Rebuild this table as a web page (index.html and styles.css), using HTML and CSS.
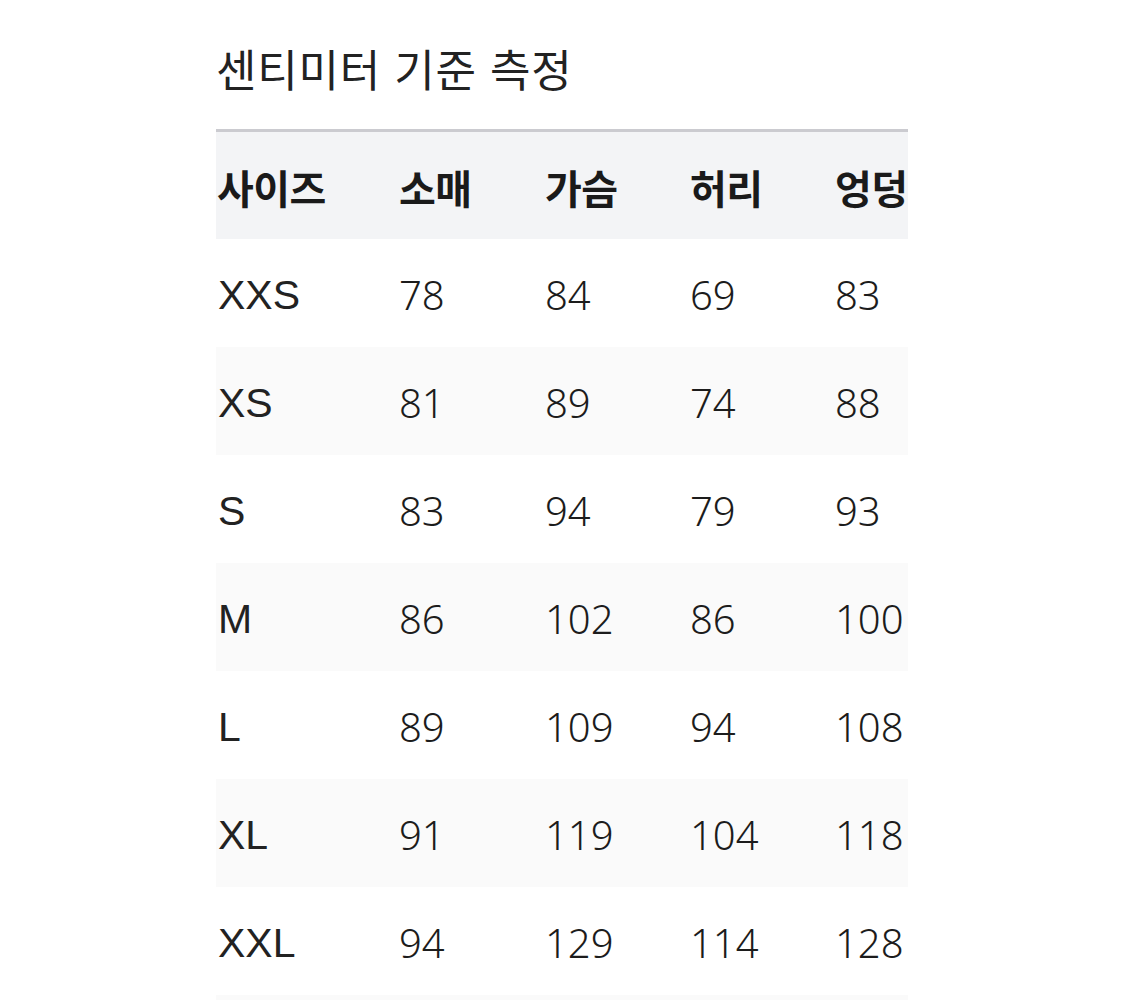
FILE: index.html
```html
<!DOCTYPE html>
<html lang="ko">
<head>
<meta charset="utf-8">
<title>사이즈 표</title>
<link rel="stylesheet" href="styles.css">
</head>
<body>
<div class="wrap">
  <h2 class="title">센티미터 기준 측정</h2>
  <div class="table">
    <div class="row head">
      <div class="cell">사이즈</div><div class="cell">소매</div><div class="cell">가슴</div><div class="cell">허리</div><div class="cell">엉덩</div>
    </div>
    <div class="row">
      <div class="cell size">XXS</div><div class="cell">78</div><div class="cell">84</div><div class="cell">69</div><div class="cell">83</div>
    </div>
    <div class="row alt">
      <div class="cell size">XS</div><div class="cell">81</div><div class="cell">89</div><div class="cell">74</div><div class="cell">88</div>
    </div>
    <div class="row">
      <div class="cell size">S</div><div class="cell">83</div><div class="cell">94</div><div class="cell">79</div><div class="cell">93</div>
    </div>
    <div class="row alt">
      <div class="cell size">M</div><div class="cell">86</div><div class="cell">102</div><div class="cell">86</div><div class="cell">100</div>
    </div>
    <div class="row">
      <div class="cell size">L</div><div class="cell">89</div><div class="cell">109</div><div class="cell">94</div><div class="cell">108</div>
    </div>
    <div class="row alt">
      <div class="cell size">XL</div><div class="cell">91</div><div class="cell">119</div><div class="cell">104</div><div class="cell">118</div>
    </div>
    <div class="row">
      <div class="cell size">XXL</div><div class="cell">94</div><div class="cell">129</div><div class="cell">114</div><div class="cell">128</div>
    </div>
    <div class="row alt"></div>
  </div>
</div>
</body>
</html>
```

FILE: styles.css
```css
html, body {
  margin: 0;
  padding: 0;
  background: #ffffff;
}
body {
  font-family: "Noto Sans", "Noto Sans CJK KR", sans-serif;
  color: #1c1c1c;
  overflow: hidden;
  height: 1000px;
}
.wrap {
  width: 692px;
  margin-left: 216px;
}
.title {
  margin: 0;
  height: 129px;
  box-sizing: border-box;
  padding-top: 46px;
  font-family: "Noto Sans CJK KR", sans-serif;
  font-size: 44px;
  line-height: 1;
  font-weight: 400;
  letter-spacing: 0.8px;
  color: #222222;
}
.table {
  border-top: 3px solid #cbcbd0;
}
.row {
  display: grid;
  grid-template-columns: 182px 146px 145px 145px 74px;
  height: 108px;
  align-items: center;
}
.row.head {
  height: 107px;
  background: #f3f4f6;
}
.row.head .cell {
  font-family: "Noto Sans CJK KR", sans-serif;
  font-weight: 700;
  font-size: 40px;
  letter-spacing: -0.5px;
  color: #1a1a1a;
  padding-top: 2px;
}
.row.alt {
  background: #fafafa;
}
.cell {
  font-size: 40px;
  font-weight: 300;
  line-height: 1;
  white-space: nowrap;
  padding-left: 1px;
  padding-top: 4px;
}
.cell.size {
  font-family: "Liberation Sans", Arial, sans-serif;
  font-weight: 400;
  font-size: 41px;
  color: #222222;
  padding-left: 2px;
}
```
